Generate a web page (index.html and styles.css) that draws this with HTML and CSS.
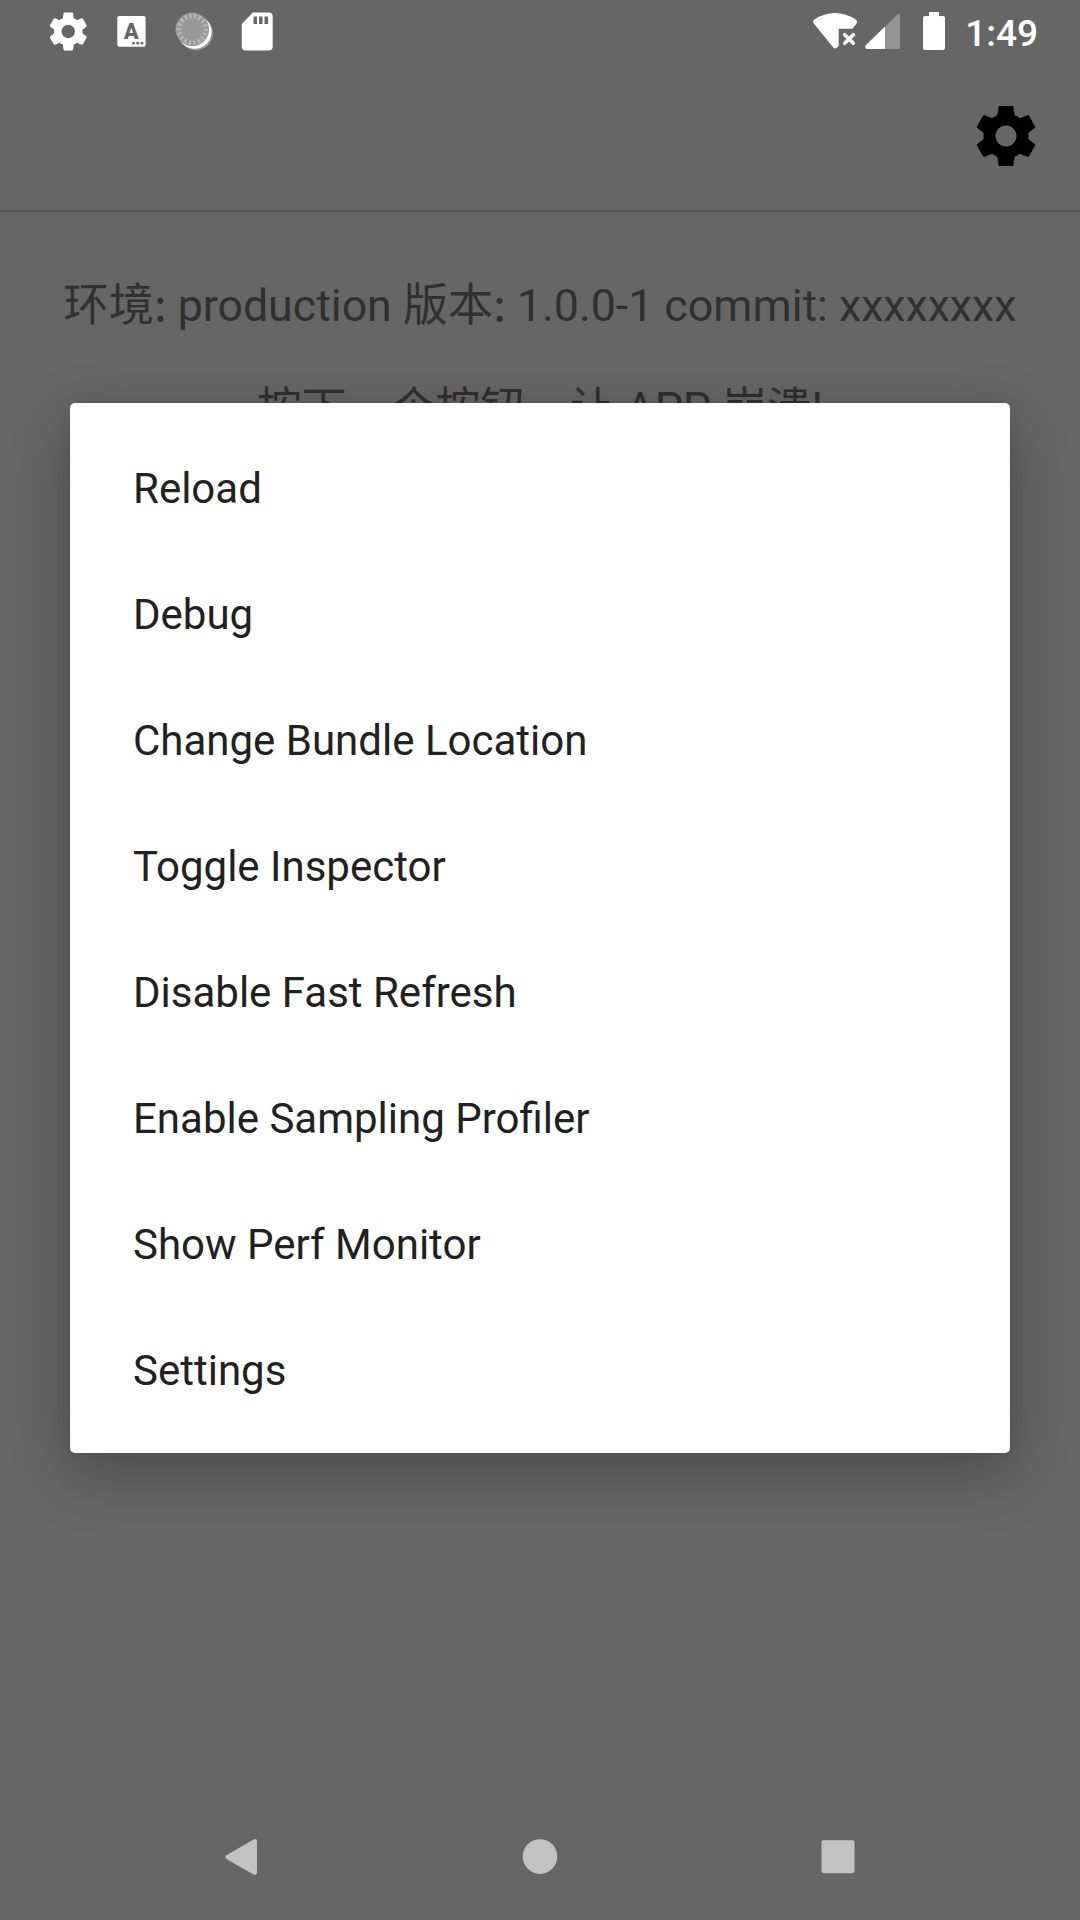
FILE: index.html
```html
<!DOCTYPE html>
<html lang="zh-CN">
<head>
<meta charset="utf-8">
<title>Developer menu</title>
<link rel="stylesheet" href="styles.css">
</head>
<body>
<div class="screen">
  <header class="status-bar">
    <div class="notifications">
      <svg class="notice" viewBox="0 0 63 63"><g transform="translate(8.5 8.7) scale(1.9)"><path fill="#fff" fill-rule="evenodd" d="M19.43 12.98c.04-.32.07-.64.07-.98s-.03-.66-.07-.98l2.11-1.65c.19-.15.24-.42.12-.64l-2-3.46c-.12-.22-.39-.3-.61-.22l-2.49 1c-.52-.4-1.08-.73-1.69-.98l-.38-2.65C14.46 2.18 14.25 2 14 2h-4c-.25 0-.46.18-.49.42l-.38 2.65c-.61.25-1.17.59-1.69.98l-2.49-1c-.23-.09-.49 0-.61.22l-2 3.46c-.13.22-.07.49.12.64l2.11 1.65c-.04.32-.07.65-.07.98s.03.66.07.98l-2.11 1.65c-.19.15-.24.42-.12.64l2 3.46c.12.22.39.3.61.22l2.49-1c.52.4 1.08.73 1.69.98l.38 2.65c.03.24.24.42.49.42h4c.25 0 .46-.18.49-.42l.38-2.65c.61-.25 1.17-.59 1.69-.98l2.49 1c.23.09.49 0 .61-.22l2-3.46c.12-.22.07-.49-.12-.64l-2.11-1.65zM12 15.5c-1.93 0-3.5-1.57-3.5-3.5s1.57-3.5 3.5-3.5 3.5 1.57 3.5 3.5-1.57 3.5-3.5 3.5z"/></g></svg>
      <svg class="notice" viewBox="0 0 63 63"><rect x="17.3" y="16" width="28.3" height="30.8" rx="2" fill="#fff"/><text class="badge-letter" x="31.3" y="38.5" text-anchor="middle">A</text><g fill="#666"><circle cx="33.5" cy="43.2" r="1.4"/><circle cx="37.7" cy="43.2" r="1.4"/><circle cx="42" cy="43.2" r="1.4"/></g></svg>
      <svg class="notice" viewBox="0 0 63 63"><circle cx="33" cy="33.3" r="17" fill="#999"/><circle cx="31.7" cy="32" r="16.8" fill="#fff"/><circle cx="29.3" cy="29.4" r="16.8" fill="#999"/><circle cx="29.3" cy="29.4" r="13.3" fill="none" stroke="#b8b8b8" stroke-width="5" stroke-dasharray="1.9 2.743" stroke-dashoffset=".95"/></svg>
      <svg class="notice" viewBox="0 0 63 63"><path fill="#fff" fill-rule="evenodd" d="M27 12.5h15.7q4 0 4 4V46.500q0 4-4 4h-23q-4 0-4-4V24zM27.500 16.500v7.500h3.500v-7.500zM33 16.500v7.500h3.500v-7.500zM38.500 16.500v7.500h3.500v-7.500z"/></svg>
    </div>
    <div class="system">
      <svg class="wifi" viewBox="0 0 46 63"><path fill="#fff" d="M1.300 19.500Q11 13 22 13T42.700 19.500Q45 21 43.500 23.500L39.500 28.700H25.700V46Q22 50.500 19.500 46.500L.8 23.500Q-.8 21 1.300 19.500z"/><path d="m31.700 34.700 8.600 8.600m0-8.600-8.600 8.600" stroke="#fff" stroke-width="3.600" stroke-linecap="round"/></svg>
      <svg class="cell" viewBox="0 0 36 63"><path fill="#949494" d="M20 27 32 14.700Q35 12.500 35 16V47.500Q35 49 33.500 49H20z"/><path fill="#fff" d="M20 26.500V49H2Q-1 48 1 45z"/></svg>
      <svg class="battery" viewBox="0 0 22 63"><path fill="#fff" d="M6 12h10v4h4q2 0 2 2v30q0 2-2 2H2q-2 0-2-2V18q0-2 2-2h4z"/></svg>
      <span class="clock">1:49</span>
    </div>
  </header>
  <div class="toolbar">
    <svg class="settings" viewBox="0 0 24 24"><path fill-rule="evenodd" d="M19.430 12.980c.04-.32.07-.64.07-.98s-.03-.66-.07-.98l2.110-1.650c.19-.15.24-.42.12-.64l-2-3.460c-.12-.22-.39-.3-.61-.22l-2.490 1c-.52-.4-1.080-.73-1.690-.98l-.38-2.650C14.460 2.180 14.250 2 14 2h-4c-.25 0-.46.18-.49.42l-.38 2.650c-.61.25-1.170.59-1.690.98l-2.490-1c-.23-.09-.49 0-.61.22l-2 3.460c-.13.22-.07.49.12.64l2.110 1.650c-.04.32-.07.65-.07.98s.03.66.07.98l-2.110 1.650c-.19.15-.24.42-.12.64l2 3.460c.12.22.39.3.61.22l2.490-1c.52.4 1.080.73 1.690.98l.38 2.650c.03.24.24.42.49.42h4c.25 0 .46-.18.49-.42l.38-2.650c.61-.25 1.170-.59 1.690-.98l2.490 1c.23.09.49 0 .61-.22l2-3.460c.12-.22.07-.49-.12-.64l-2.110-1.650zM12 15.500c-1.930 0-3.500-1.570-3.500-3.500s1.570-3.500 3.500-3.500 3.500 1.570 3.500 3.500-1.570 3.500-3.500 3.500z"/></svg>
  </div>
  <main class="content">
    <p class="line"><span class="label">环境:</span> production <span class="label">版本:</span> 1.0.0-1 commit: xxxxxxxx</p>
    <p class="line">按下一个按钮，让 APP 崩溃!</p>
  </main>
  <nav class="nav-bar">
    <svg class="nav-icon" viewBox="0 0 60 60"><path d="M15.500 28.300 42.500 12.500Q46 11 46 14.500V45.500Q46 49 42.500 47.500L15.500 32Q13.500 30.200 15.500 28.300z"/></svg>
    <svg class="nav-icon" viewBox="0 0 60 60"><circle cx="30" cy="29.600" r="17.300"/></svg>
    <svg class="nav-icon" viewBox="0 0 60 60"><rect x="13.500" y="13.300" width="33" height="33" rx="2"/></svg>
  </nav>
  <ul class="menu">
    <li class="item">Reload</li>
    <li class="item">Debug</li>
    <li class="item">Change Bundle Location</li>
    <li class="item">Toggle Inspector</li>
    <li class="item">Disable Fast Refresh</li>
    <li class="item">Enable Sampling Profiler</li>
    <li class="item">Show Perf Monitor</li>
    <li class="item">Settings</li>
  </ul>
</div>
</body>
</html>
```
FILE: styles.css
```css
* { box-sizing: border-box; }
body { margin: 0; }
svg { display: block; flex: none; }
.screen {
  position: relative;
  display: flex;
  flex-direction: column;
  width: 1080px;
  height: 1920px;
  overflow: hidden;
  background: #666;
  font-family: Roboto, "Noto Sans CJK SC", sans-serif;
}
.status-bar {
  display: flex;
  justify-content: space-between;
  height: 63px;
  padding: 0 42px 0 37px;
}
.notifications, .system { display: flex; }
.notice { width: 63px; height: 63px; }
.badge-letter { font: 900 22px Roboto, sans-serif; fill: #666; }
.wifi { width: 46px; height: 63px; margin-right: 6px; }
.cell { width: 36px; height: 63px; margin-right: 22px; }
.battery { width: 22px; height: 63px; margin-right: 20px; }
.clock {
  color: #fff;
  font-size: 37px;
  font-weight: 500;
  line-height: 67px;
}
.toolbar {
  display: flex;
  align-items: center;
  justify-content: flex-end;
  height: 149px;
  padding: 0 38px 2px 0;
  border-bottom: 2px solid #575757;
}
.settings { width: 72px; height: 72px; }
.content { flex: 1; padding-top: 44px; }
.line {
  height: 65px;
  margin: 0 0 38px;
  color: #303030;
  font-size: 44.7px;
  line-height: 100px;
  text-align: center;
  white-space: nowrap;
}
.label {
  font-family: "Noto Sans CJK SC", sans-serif;
  font-size: 45.2px;
  line-height: 1;
}
.nav-bar {
  display: flex;
  justify-content: space-between;
  align-items: center;
  height: 126px;
  padding: 0 212px 0 211px;
}
.nav-icon { width: 60px; height: 60px; fill: #c2c2c2; }
.menu {
  position: absolute;
  left: 70px;
  top: 403px;
  width: 940px;
  margin: 0;
  padding: 21px 0;
  list-style: none;
  background: #fff;
  border-radius: 5px;
  box-shadow: 0 20px 60px rgba(0, 0, 0, .26), 0 0 16px rgba(0, 0, 0, .06);
}
.item {
  height: 126px;
  padding-left: 63px;
  color: #212121;
  font-size: 42px;
  line-height: 130px;
}
```
